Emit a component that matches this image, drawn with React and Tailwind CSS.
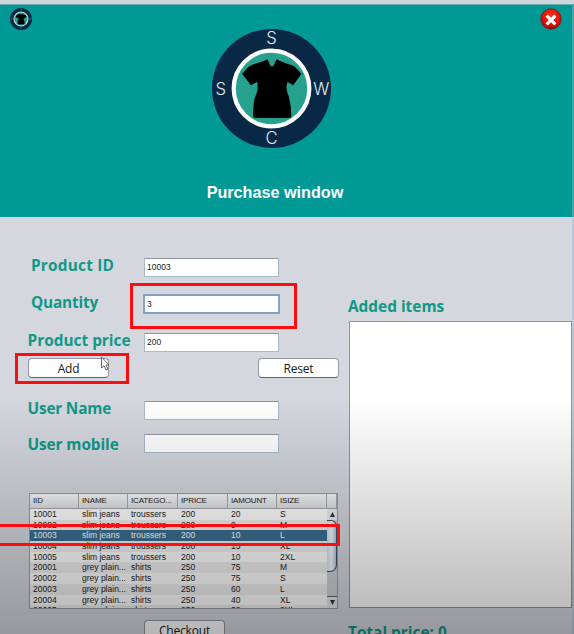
import React from "react";

const ui = "font-['Open_Sans','Noto_Sans',sans-serif]";
const arial = "font-['Liberation_Sans',Arial,sans-serif]";

const shirt =
  "M54.7 30.8C50 34 45 33.5 37.5 37.5C34.5 39.5 33 42 30.7 44.5L38.7 55L45.5 51.5L46 59C46 63 42.5 68 42 73L41.3 86Q41.3 87.7 43 87.7L76.5 87.7Q78 87.7 78 86C78 79 77 72 75.5 67C74 63 73 61 73.2 57L74.5 51.5L80.3 55L88 44.5C85 41.5 83 38.5 80.3 37C76 35 69 34 64.3 30.8L61.2 37.5H57.8Z";

function Logo({ size, letters = true }) {
  return (
    <svg width={size} height={size} viewBox="0 0 118 118" className="block shrink-0 overflow-visible">
      <circle cx="59" cy="59" r="59" fill="#082846" />
      <circle cx="59" cy="59" r="37.5" fill="#25a18e" stroke={letters ? "#fff" : "#bfdcdc"} strokeWidth={letters ? 4.2 : 6} />
      <path d={shirt} fill="#000" stroke="#000" strokeWidth="1.2" strokeLinejoin="round" />
      <g
        fill={letters ? "#e3edf5" : "#7893a5"}
        className="font-['Inter',sans-serif] font-light"
        fontSize="16.5"
        textAnchor="middle"
      >
        <text x="59" y="15">S</text>
        <text x="8.7" y="65">S</text>
        <text x="108.3" y="65">W</text>
        <text x="59" y="114">C</text>
      </g>
    </svg>
  );
}

function Field({ label, value, height, indent = "pl-[27.5px]", focused = false, lift = "pb-[3px]", tracking = "" }) {
  return (
    <div className={`flex shrink-0 items-center ${height}`}>
      <div className={`${ui} ${indent} ${lift} ${tracking} w-[144px] shrink-0 whitespace-nowrap text-[15.4px] leading-5 font-bold text-[#129887]`}>
        {label}
      </div>
      <div
        className={`${arial} flex items-center bg-white text-[8.5px] text-[#222] ${
          focused
            ? "-ml-px h-5 w-[137px] border-2 border-[#87a2c3] pl-[2px]"
            : "h-[19px] w-[135px] border border-[#a9b9cb] border-t-[#8f959c] pl-[2px]"
        }`}
      >
        {value}
      </div>
    </div>
  );
}

function Button({ children, className = "" }) {
  return (
    <div
      className={`${ui} flex h-5 w-[81px] items-center justify-center rounded-[4px] border border-[#92969e] border-b-[#5d6675] bg-white pt-[2px] text-[12px] leading-none tracking-[-0.2px] text-[#171717] ${className}`}
    >
      {children}
    </div>
  );
}

const rows = [
  ["10001", "slim jeans", "troussers", "200", "20", "S"],
  ["10002", "slim jeans", "troussers", "200", "9", "M"],
  ["10003", "slim jeans", "troussers", "200", "10", "L"],
  ["10004", "slim jeans", "troussers", "200", "15", "XL"],
  ["10005", "slim jeans", "troussers", "200", "10", "2XL"],
  ["20001", "grey plain...", "shirts", "250", "75", "M"],
  ["20002", "grey plain...", "shirts", "250", "75", "S"],
  ["20003", "grey plain...", "shirts", "250", "60", "L"],
  ["20004", "grey plain...", "shirts", "250", "40", "XL"],
  ["20005", "grey plain...", "shirts", "250", "30", "2XL"],
];

function Table() {
  return (
    <div className={`${arial} ml-[29px] flex h-[116px] w-[309px] flex-col overflow-hidden border border-[#969da6] bg-white text-[8.5px] text-[#222]`}>
      <div className="grid h-[15px] shrink-0 grid-cols-[49px_49px_50px_50px_49px_50px_10px] border-b border-[#a5a9af] bg-linear-to-b from-[#fafafa] to-[#dde0e4] text-[8px] leading-[14px]">
        {["IID", "INAME", "ICATEGO...", "IPRICE", "IAMOUNT", "ISIZE", ""].map((h, i) => (
          <div key={i} className="overflow-hidden border-r border-[#a5a9af] pl-[3px] tracking-[-0.15px] whitespace-nowrap">
            {h}
          </div>
        ))}
      </div>
      <div className="flex min-h-0 flex-1">
        <div className="w-[297px] shrink-0 overflow-hidden">
          {rows.map((r, i) => (
            <div
              key={r[0]}
              className={`grid h-[10.7px] grid-cols-[49px_49px_50px_50px_49px_50px] leading-[11px] ${
                i === 2 ? "bg-[#3b6f90] text-white" : i % 2 ? "bg-[#f0f0f0]" : "bg-white"
              }`}
            >
              {r.map((c, j) => (
                <div key={j} className="pl-[3px] whitespace-nowrap">
                  {c}
                </div>
              ))}
            </div>
          ))}
        </div>
        <div className="flex w-[10px] flex-col items-center bg-[#cdd1d6]">
          <div className="flex h-[11px] w-full items-center justify-center bg-[#eceef0]">
            <svg width="5" height="5" viewBox="0 0 5 5"><path d="M2.5 0L5 5H0Z" fill="#333" /></svg>
          </div>
          <div className="h-[52px] w-full rounded-tr-[6px] rounded-br-[7px] border border-l-0 border-[#3d5368] bg-linear-to-r from-[#d5e3ef] via-[#f2f8fc] to-[#b2c6d8]" />
          <div className="flex-1" />
          <div className="flex h-[12px] w-full items-center justify-center border-t border-[#59636d] bg-[#e5e7e9]">
            <svg width="5" height="5" viewBox="0 0 5 5"><path d="M0 0H5L2.5 5Z" fill="#333" /></svg>
          </div>
        </div>
      </div>
    </div>
  );
}

export default function App() {
  return (
    <div className="relative flex h-[634px] w-[574px] flex-col overflow-hidden bg-[#d4d7de]">
      <div className="h-1 shrink-0 bg-[#cbd6df]" />
      <header className="flex h-[213px] shrink-0 justify-between border-t border-r-2 border-t-[#6da9ab] border-r-[#4aa5aa] bg-[#009996]">
        <div className="w-[52px] pt-[3px] pl-[10px]">
          <Logo size={22} letters={false} />
        </div>
        <div className="flex flex-col items-center pt-6">
          <Logo size={119} />
          <h1 className={`${arial} mt-[34px] ml-[6px] text-[16.2px] leading-5 font-bold whitespace-nowrap text-white`}>
            Purchase window
          </h1>
        </div>
        <div className="flex w-[80px] justify-end pt-[3px] pr-[10px]">
          <svg width="22" height="22" viewBox="0 0 22 22">
            <defs>
              <radialGradient id="close" cx="50%" cy="35%" r="65%">
                <stop offset="0" stopColor="#f93620" />
                <stop offset="0.65" stopColor="#e70d06" />
                <stop offset="1" stopColor="#a00" />
              </radialGradient>
            </defs>
            <circle cx="11" cy="11" r="10.2" fill="url(#close)" stroke="#64282a" strokeWidth="0.9" />
            <path d="M7.8 8.8L14.2 15.2M14.2 8.8L7.8 15.2" stroke="#fff" strokeWidth="3.2" strokeLinecap="square" />
          </svg>
        </div>
      </header>

      <main className="flex h-[417px] overflow-hidden border-r-2 border-[#b9cbd4]">
        <section className="flex w-[348px] shrink-0 flex-col pt-8">
          <Field label="Product ID" value="10003" height="h-[37px]" indent="pl-[31px]" tracking="tracking-[0.2px]" />
          <Field label="Quantity" value="3" height="h-9" indent="pl-[31px]" tracking="tracking-[-0.2px]" focused />
          <Field label="Product price" value="200" height="mt-[5px] h-[31px]" />
          <div className="flex h-5 w-[339px] shrink-0 justify-between pl-7">
            <Button>Add</Button>
            <Button>Reset</Button>
          </div>
          <div className="mt-4 shrink-0">
            <Field label="User Name" value="" height="h-[33px]" tracking="tracking-[-0.2px]" />
            <Field label="User mobile" value="" height="h-[33px]" lift="pt-[3px]" tracking="tracking-[-0.1px]" />
          </div>
          <div className="mt-[33px] shrink-0">
            <Table />
          </div>
          <Button className="mt-[11px] ml-[144px] shrink-0">Checkout</Button>
        </section>
        <section className="flex flex-1 flex-col pt-[80px]">
          <h2 className={`${ui} text-[15.4px] leading-5 font-bold text-[#129887]`}>Added items</h2>
          <div className="mt-[4px] ml-px h-[287px] w-[223px] shrink-0 border border-[#8e929a] bg-white" />
          <div className={`${ui} mt-[15px] shrink-0 text-[15.4px] leading-5 font-bold whitespace-nowrap text-[#129887]`}>
            Total price: 0
          </div>
        </section>
      </main>

      <div className="pointer-events-none absolute inset-x-0 top-[396px] bottom-0 bg-linear-to-b from-black/0 to-black/29" />

      <div className="absolute top-[283px] left-[130px] h-[46px] w-[167px] border-3 border-[#fb0d12]" />
      <div className="absolute top-[353px] left-[15px] h-[31px] w-[114px] border-3 border-[#fb0d12]" />
      <div className="absolute top-[524px] left-[-3px] h-[22px] w-[343px] border-3 border-[#fb0d12]" />
      <svg className="absolute top-[356px] left-[100px]" width="10" height="16" viewBox="0 0 10 16">
        <path d="M1.5 1V12L4 9.8L6 14L8 13L6 9H9Z" fill="#fff" stroke="#555" strokeWidth="0.9" />
      </svg>
    </div>
  );
}
